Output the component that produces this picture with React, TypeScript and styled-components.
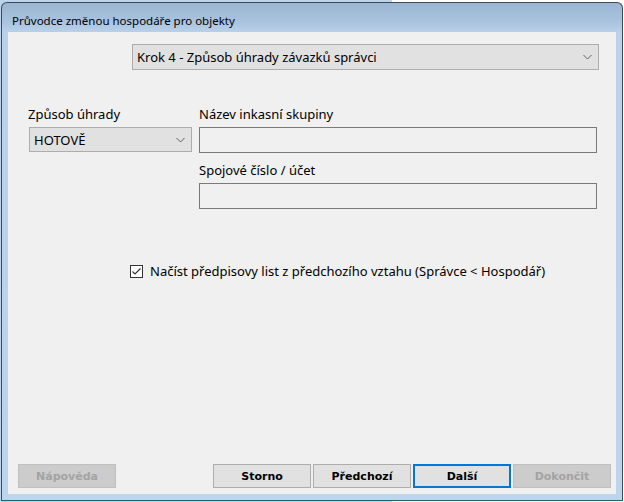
import React from "react";
import styled, { createGlobalStyle } from "styled-components";

const Global = createGlobalStyle`
  html, body { margin: 0; padding: 0; background: #ffffff; }
  body { width: 624px; height: 502px; overflow: hidden; font-family: "Noto Sans", "Open Sans", sans-serif; }
  * { box-sizing: border-box; }
`;

const Backdrop = styled.div`
  width: 624px;
  height: 502px;
  padding: 2px 1px 0 1px;
  background: linear-gradient(to right, #bcd3eb 0 392px, #ffffff 392px);
`;

const Window = styled.div`
  width: 622px;
  height: 499px;
  border: 1px solid #3d4b59;
  border-bottom-color: #1f5f6f;
  border-radius: 6px 6px 0 0;
  background: linear-gradient(to bottom, #9bb6d2 0px, #a9c3de 18px, #bad1e9 30px, #bcd4ec 100%);
  display: flex;
  flex-direction: column;
  padding: 0 6px 6px 6px;
`;

const TitleBar = styled.div`
  height: 29px;
  display: flex;
  align-items: center;
  padding: 5px 0 0 4px;
  font-size: 11.5px;
  color: #000;
`;

const Client = styled.div`
  flex: 1;
  background: #f0f0f0;
  display: flex;
  flex-direction: column;
  padding: 12px 0 6px 0;
  font-size: 13px;
  color: #000;
`;

const StepRow = styled.div`
  display: flex;
  padding-left: 124px;
  padding-right: 17px;
`;

const Combo = styled.div`
  height: 26px;
  flex: 1;
  background: #e1e1e1;
  border: 1px solid #adadad;
  display: flex;
  align-items: center;
  padding: 0 0 0 4px;
`;

const ComboText = styled.span`
  flex: 1;
  white-space: nowrap;
`;

const Chevron = styled.svg`
  width: 9px;
  height: 6px;
  margin-right: 6px;
`;

const FormRow = styled.div`
  display: flex;
  margin-top: 35px;
  padding-left: 20px;
  padding-right: 19px;
`;

const LeftCol = styled.div`
  width: 171px;
  display: flex;
  flex-direction: column;
`;

const RightCol = styled.div`
  flex: 1;
  display: flex;
  flex-direction: column;
`;

const Label = styled.div<{ $top?: number }>`
  height: 19px;
  line-height: 19px;
  margin-top: ${(p) => p.$top ?? 0}px;
  margin-bottom: 3px;
  white-space: nowrap;
`;

const LeftCombo = styled(Combo)`
  flex: none;
  margin-left: 1px;
  width: 163px;
  height: 25px;
`;

const TextBox = styled.div`
  height: 26px;
  flex: none;
  border: 1px solid #7a7a7a;
  background: #f0f0f0;
`;

const CheckRow = styled.label`
  display: flex;
  align-items: center;
  height: 18px;
  margin-top: 53px;
  padding-left: 122px;
  gap: 7px;
`;

const Box = styled.svg`
  width: 13px;
  height: 13px;
  flex: none;
`;

const Spacer = styled.div`
  flex: 1;
`;

const ButtonBar = styled.div`
  display: flex;
  align-items: center;
  padding: 0 5px 0 10px;
  gap: 2px;
`;

const Button = styled.button<{ $disabled?: boolean; $default?: boolean }>`
  width: 98px;
  height: 24px;
  margin: 0;
  padding: 0;
  font-family: "DejaVu Sans", "Noto Sans", sans-serif;
  font-weight: bold;
  font-size: 11px;
  color: ${(p) => (p.$disabled ? "#a3a3a3" : "#000")};
  background: ${(p) => (p.$disabled ? "#cccccc" : "#e1e1e1")};
  border: ${(p) =>
    p.$default ? "2px solid #0078d7" : p.$disabled ? "1px solid #bfbfbf" : "1px solid #adadad"};
  cursor: default;
`;

const Gap = styled.div`
  flex: 1;
`;

const ChevronIcon = () => (
  <Chevron viewBox="0 0 9 6">
    <polyline points="0.5,1 4.5,5 8.5,1" fill="none" stroke="#606060" strokeWidth="1" />
  </Chevron>
);

export default function App() {
  return (
    <>
      <Global />
      <Backdrop>
        <Window>
          <TitleBar>Průvodce změnou hospodáře pro objekty</TitleBar>
          <Client>
            <StepRow>
              <Combo>
                <ComboText>Krok 4 - Způsob úhrady závazků správci</ComboText>
                <ChevronIcon />
              </Combo>
            </StepRow>
            <FormRow>
              <LeftCol>
                <Label>Způsob úhrady</Label>
                <LeftCombo>
                  <ComboText>HOTOVĚ</ComboText>
                  <ChevronIcon />
                </LeftCombo>
              </LeftCol>
              <RightCol>
                <Label>Název inkasní skupiny</Label>
                <TextBox />
                <Label $top={8}>Spojové číslo / účet</Label>
                <TextBox />
              </RightCol>
            </FormRow>
            <CheckRow>
              <Box viewBox="0 0 13 13">
                <rect x="0.5" y="0.5" width="12" height="12" fill="#ffffff" stroke="#333333" />
                <polyline points="2.5,6.5 5,9 10.5,3.5" fill="none" stroke="#333333" strokeWidth="1.2" />
              </Box>
              Načíst předpisovy list z předchozího vztahu (Správce &lt; Hospodář)
            </CheckRow>
            <Spacer />
            <ButtonBar>
              <Button $disabled>Nápověda</Button>
              <Gap />
              <Button>Storno</Button>
              <Button>Předchozí</Button>
              <Button $default>Další</Button>
              <Button $disabled>Dokončit</Button>
            </ButtonBar>
          </Client>
        </Window>
      </Backdrop>
    </>
  );
}
